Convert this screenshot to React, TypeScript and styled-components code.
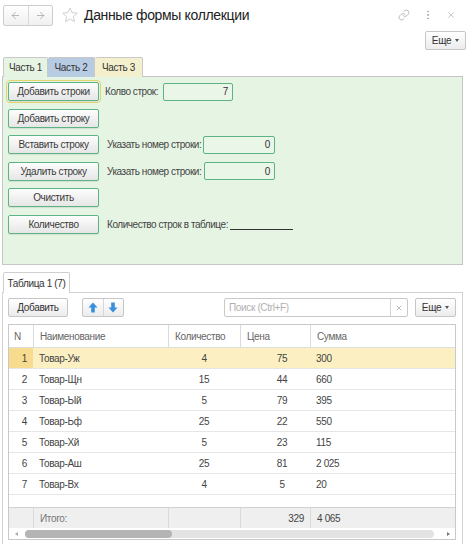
import React from "react";
import styled, { createGlobalStyle, css } from "styled-components";
import { ArrowLeft, ArrowRight, Link, EllipsisVertical, X } from "lucide-react";

const GlobalStyle = createGlobalStyle`
  * { box-sizing: border-box; }
  body {
    margin: 0;
    background: #fff;
    font-family: "Liberation Sans", Arial, sans-serif;
    font-size: 10px;
    letter-spacing: -0.35px;
    color: #333;
  }
  button { letter-spacing: inherit; }
`;

const GREEN_BORDER = "#5cb484";

const Page = styled.div`
  width: 470px;
  height: 544px;
  overflow: hidden;
`;

const TopBar = styled.div`
  display: flex;
  align-items: center;
  height: 27px;
  padding: 3px 0 0 3px;
`;

const NavGroup = styled.div`
  display: flex;
  width: 50px;
  height: 21px;
  border: 1px solid #cdcdcd;
  border-radius: 2px;
  background: linear-gradient(#ffffff, #f0f0f0);
`;

const NavButton = styled.span`
  flex: 1;
  display: flex;
  align-items: center;
  justify-content: center;
  color: #a0a0a0;
  & + & {
    border-left: 1px solid #d9d9d9;
  }
`;

const Star = styled.svg`
  margin-left: 8px;
  width: 18px;
  height: 18px;
`;

const Title = styled.h1`
  margin: 0 0 0 5px;
  font-size: 14px;
  letter-spacing: -0.35px;
  font-weight: normal;
  color: #222;
`;

const WindowTools = styled.div`
  margin-left: auto;
  display: flex;
  align-items: center;
  gap: 12px;
  padding-right: 14px;
  color: #a8a8a8;
`;

const CommandBar = styled.div`
  display: flex;
  justify-content: flex-end;
  margin-top: 4px;
  padding-right: 4px;
`;

const GrayButton = styled.button<{ $w: number }>`
  display: flex;
  align-items: center;
  justify-content: center;
  gap: 4px;
  width: ${({ $w }) => $w}px;
  height: 19px;
  padding: 0;
  border: 1px solid #c6c6c6;
  border-radius: 2px;
  background: linear-gradient(#ffffff, #ececec);
  font-family: inherit;
  font-size: 10px;
  color: #333;
`;

const Caret = styled.span`
  width: 0;
  height: 0;
  border-left: 2.5px solid transparent;
  border-right: 2.5px solid transparent;
  border-top: 3px solid #555;
`;

const Tabs = styled.div`
  display: flex;
  margin-top: 7px;
  padding-left: 3px;
`;

type Tone = "green" | "blue" | "yellow";

const toneBg: Record<Tone, string> = {
  green: "#e6f4e3",
  blue: "#b7cbe3",
  yellow: "#f4f0cd",
};

const Tab = styled.div<{ $tone: Tone; $active?: boolean; $w: number }>`
  display: flex;
  align-items: center;
  justify-content: center;
  width: ${({ $w }) => $w}px;
  height: 20px;
  margin-bottom: -1px;
  border: 1px solid #c9c9c9;
  border-bottom: none;
  border-radius: 2px 2px 0 0;
  background: ${({ $tone }) => toneBg[$tone]};
  color: #333;
  white-space: nowrap;
  position: relative;
  z-index: ${({ $active }) => ($active ? 1 : 0)};
  & + & {
    border-left: none;
  }
`;

const FormPanel = styled.div`
  display: grid;
  grid-auto-rows: 19px;
  row-gap: 7.6px;
  align-content: start;
  height: 189px;
  margin: 0 7px 0 2px;
  padding: 5px 0 0 5px;
  border: 1px solid #c6c6c6;
  background: #e6f4e3;
`;

const FormRow = styled.div`
  display: flex;
  align-items: center;
`;

const ActionButton = styled.button<{ $focused?: boolean }>`
  width: 91px;
  height: 19px;
  padding: 0;
  border: 1px solid ${GREEN_BORDER};
  border-radius: 2px;
  background: linear-gradient(#fdfdfd, #e6e6e6);
  box-shadow: 0 1px 1px rgba(0, 0, 0, 0.08);
  font-family: inherit;
  font-size: 10px;
  color: #3a3a3a;
  white-space: nowrap;
  ${({ $focused }) =>
    $focused &&
    css`
      outline: 1px solid #e6d36c;
      outline-offset: 1px;
    `}
`;

const FieldLabel = styled.span<{ $w?: number; $gap: number }>`
  margin-left: ${({ $gap }) => $gap}px;
  width: ${({ $w }) => ($w ? `${$w}px` : "auto")};
  color: #444;
  letter-spacing: -0.45px;
  white-space: nowrap;
`;

const NumberField = styled.div<{ $w: number }>`
  display: flex;
  align-items: center;
  justify-content: flex-end;
  width: ${({ $w }) => $w}px;
  height: 18px;
  padding-right: 4px;
  border: 1px solid ${GREEN_BORDER};
  border-radius: 2px;
  background: #eaf6e8;
  color: #333;
`;

const ResultLine = styled.span`
  width: 63px;
  height: 12px;
  margin-left: 3px;
  border-bottom: 1px solid #333;
`;

const TableTab = styled.div`
  display: flex;
  align-items: center;
  justify-content: center;
  width: 67px;
  height: 21px;
  margin: 7px 0 -1px 3px;
  border: 1px solid #cfcfcf;
  border-bottom: none;
  border-radius: 2px 2px 0 0;
  background: #fff;
  color: #333;
  white-space: nowrap;
  position: relative;
  z-index: 1;
`;

const TablePage = styled.div`
  height: 260px;
  margin: 0 7px 0 2px;
  padding: 5px 6px 0 5px;
  border: 1px solid #d2d2d2;
  border-bottom: none;
`;

const Toolbar = styled.div`
  display: flex;
  align-items: center;
  height: 19px;
`;

const ArrowGroup = styled.div`
  display: flex;
  width: 42px;
  height: 19px;
  margin-left: 14px;
  border: 1px solid #c6c6c6;
  border-radius: 2px;
  background: linear-gradient(#ffffff, #ececec);
`;

const ArrowCell = styled.span`
  flex: 1;
  display: flex;
  align-items: center;
  justify-content: center;
  & + & {
    border-left: 1px solid #d6d6d6;
  }
`;

const SearchBox = styled.div`
  display: flex;
  margin-left: auto;
  margin-right: 7px;
  width: 184px;
  height: 19px;
  border: 1px solid #c9c9c9;
  border-radius: 2px;
  background: #fff;
`;

const SearchInput = styled.span`
  flex: 1;
  display: flex;
  align-items: center;
  padding-left: 4px;
  color: #b0b0b0;
`;

const SearchClear = styled.span`
  display: flex;
  align-items: center;
  justify-content: center;
  width: 17px;
  border-left: 1px solid #d6d6d6;
  color: #888;
`;

const Grid = styled.div`
  margin-top: 7px;
  border: 1px solid #c9c9c9;
`;

const COLUMNS = "24px 135px 72px 70px 1fr";

const GridRow = styled.div<{ $kind: "head" | "body" | "foot"; $selected?: boolean }>`
  display: grid;
  grid-template-columns: ${COLUMNS};
  height: ${({ $kind }) => ($kind === "head" ? 23 : 21)}px;
  color: #444;
  ${({ $kind }) =>
    $kind === "head" &&
    css`
      color: #666;
      border-bottom: 1px solid #dedede;
    `}
  ${({ $kind }) =>
    $kind === "body" &&
    css`
      border-bottom: 1px solid #e6e6e6;
    `}
  ${({ $kind }) =>
    $kind === "foot" &&
    css`
      background: #efefef;
      border-top: 1px solid #d2d2d2;
      color: #777;
    `}
  ${({ $selected }) =>
    $selected &&
    css`
      background: #fcf0c3;
    `}
`;

const Cell = styled.div<{
  $align?: "left" | "center" | "right";
  $divider?: boolean;
  $pl?: number;
  $marker?: boolean;
  $strong?: boolean;
}>`
  display: flex;
  align-items: center;
  justify-content: ${({ $align }) =>
    $align === "right" ? "flex-end" : $align === "center" ? "center" : "flex-start"};
  padding: 0 ${({ $align }) => ($align === "right" ? 6 : 0)}px 0 ${({ $pl }) => $pl ?? 6}px;
  white-space: nowrap;
  ${({ $strong }) =>
    $strong &&
    css`
      color: #444;
    `}
  ${({ $divider }) =>
    $divider &&
    css`
      border-left: 1px solid #dadada;
    `}
  ${({ $marker }) =>
    $marker &&
    css`
      background: #f7db8e;
    `}
`;

const Spacer = styled.div`
  height: 12px;
`;

const ScrollBar = styled.div`
  display: flex;
  align-items: center;
  height: 11px;
  padding: 0 5px 0 6px;
  gap: 7px;
`;

const ScrollArrow = styled.span<{ $dir: "left" | "right" }>`
  width: 0;
  height: 0;
  border-top: 2px solid transparent;
  border-bottom: 2px solid transparent;
  ${({ $dir }) =>
    $dir === "left"
      ? css`
          border-right: 3px solid #aaa;
        `
      : css`
          border-left: 3px solid #777;
        `}
`;

const ScrollTrack = styled.div`
  flex: 1;
  height: 8px;
  border-radius: 4px;
  background: #e3e3e3;
  margin-right: 6px;
`;

const ScrollThumb = styled.div`
  height: 100%;
  border-radius: 4px;
  background: #b4b4b4;
`;

const BlueArrow = ({ down }: { down?: boolean }) => (
  <svg width="10" height="11" viewBox="0 0 10 11">
    <path
      d="M5 0.5 L9.5 5.5 H6.8 V10.5 H3.2 V5.5 H0.5 Z"
      fill="#3a8fdc"
      transform={down ? "rotate(180 5 5.5)" : undefined}
    />
  </svg>
);

interface Item {
  n: number;
  name: string;
  qty: number;
  price: number;
  sum: string;
}

const items: Item[] = [
  { n: 1, name: "Товар-Уж", qty: 4, price: 75, sum: "300" },
  { n: 2, name: "Товар-Щн", qty: 15, price: 44, sum: "660" },
  { n: 3, name: "Товар-Ый", qty: 5, price: 79, sum: "395" },
  { n: 4, name: "Товар-Ьф", qty: 25, price: 22, sum: "550" },
  { n: 5, name: "Товар-Хй", qty: 5, price: 23, sum: "115" },
  { n: 6, name: "Товар-Аш", qty: 25, price: 81, sum: "2 025" },
  { n: 7, name: "Товар-Вх", qty: 4, price: 5, sum: "20" },
];

const App: React.FC = () => {
  const thumbShare = 0.36;

  return (
    <Page>
      <GlobalStyle />
      <TopBar>
        <NavGroup>
          <NavButton>
            <ArrowLeft size={11} strokeWidth={1.6} />
          </NavButton>
          <NavButton>
            <ArrowRight size={11} strokeWidth={1.6} />
          </NavButton>
        </NavGroup>
        <Star viewBox="0 0 24 24">
          <path
            d="M12 2.5 L14.8 8.9 L21.7 9.5 L16.5 14.1 L18 20.9 L12 17.3 L6 20.9 L7.5 14.1 L2.3 9.5 L9.2 8.9 Z"
            fill="none"
            stroke="#c9c9c9"
            strokeWidth="1.2"
            strokeLinejoin="round"
          />
        </Star>
        <Title>Данные формы коллекции</Title>
        <WindowTools>
          <Link size={12} strokeWidth={1.5} />
          <EllipsisVertical size={12} strokeWidth={2} />
          <X size={10} strokeWidth={1.5} />
        </WindowTools>
      </TopBar>

      <CommandBar>
        <GrayButton $w={41}>
          Еще <Caret />
        </GrayButton>
      </CommandBar>

      <Tabs>
        <Tab $tone="green" $active $w={45}>
          Часть 1
        </Tab>
        <Tab $tone="blue" $w={47}>
          Часть 2
        </Tab>
        <Tab $tone="yellow" $w={48}>
          Часть 3
        </Tab>
      </Tabs>

      <FormPanel>
        <FormRow>
          <ActionButton $focused>Добавить строки</ActionButton>
          <FieldLabel $gap={6} $w={58}>
            Колво строк:
          </FieldLabel>
          <NumberField $w={70}>7</NumberField>
        </FormRow>
        <FormRow>
          <ActionButton>Добавить строку</ActionButton>
        </FormRow>
        <FormRow>
          <ActionButton>Вставить строку</ActionButton>
          <FieldLabel $gap={8} $w={96}>
            Указать номер строки:
          </FieldLabel>
          <NumberField $w={72}>0</NumberField>
        </FormRow>
        <FormRow>
          <ActionButton>Удалить строку</ActionButton>
          <FieldLabel $gap={8} $w={97}>
            Указать номер строки:
          </FieldLabel>
          <NumberField $w={71}>0</NumberField>
        </FormRow>
        <FormRow>
          <ActionButton>Очистить</ActionButton>
        </FormRow>
        <FormRow>
          <ActionButton>Количество</ActionButton>
          <FieldLabel $gap={8} $w={120}>
            Количество строк в таблице:
          </FieldLabel>
          <ResultLine />
        </FormRow>
      </FormPanel>

      <TableTab>Таблица 1 (7)</TableTab>
      <TablePage>
        <Toolbar>
          <GrayButton $w={60}>Добавить</GrayButton>
          <ArrowGroup>
            <ArrowCell>
              <BlueArrow />
            </ArrowCell>
            <ArrowCell>
              <BlueArrow down />
            </ArrowCell>
          </ArrowGroup>
          <SearchBox>
            <SearchInput>Поиск (Ctrl+F)</SearchInput>
            <SearchClear>
              <X size={8} strokeWidth={1.6} />
            </SearchClear>
          </SearchBox>
          <GrayButton $w={41}>
            Еще <Caret />
          </GrayButton>
        </Toolbar>

        <Grid>
          <GridRow $kind="head">
            <Cell $pl={5}>N</Cell>
            <Cell $divider>Наименование</Cell>
            <Cell $divider>Количество</Cell>
            <Cell $divider>Цена</Cell>
            <Cell $divider>Сумма</Cell>
          </GridRow>
          {items.map((item) => (
            <GridRow key={item.n} $kind="body" $selected={item.n === 1}>
              <Cell $align="right" $marker={item.n === 1}>
                {item.n}
              </Cell>
              <Cell>{item.name}</Cell>
              <Cell $align="center" $pl={0}>
                {item.qty}
              </Cell>
              <Cell $align="center" $pl={14}>
                {item.price}
              </Cell>
              <Cell>{item.sum}</Cell>
            </GridRow>
          ))}
          <Spacer />
          <GridRow $kind="foot">
            <Cell />
            <Cell $divider>Итого:</Cell>
            <Cell $divider />
            <Cell $divider $align="right" $strong>
              329
            </Cell>
            <Cell $divider $strong>
              4 065
            </Cell>
          </GridRow>
          <ScrollBar>
            <ScrollArrow $dir="left" />
            <ScrollTrack>
              <ScrollThumb style={{ width: `${thumbShare * 100}%` }} />
            </ScrollTrack>
            <ScrollArrow $dir="right" />
          </ScrollBar>
        </Grid>
      </TablePage>
    </Page>
  );
};

export default App;
